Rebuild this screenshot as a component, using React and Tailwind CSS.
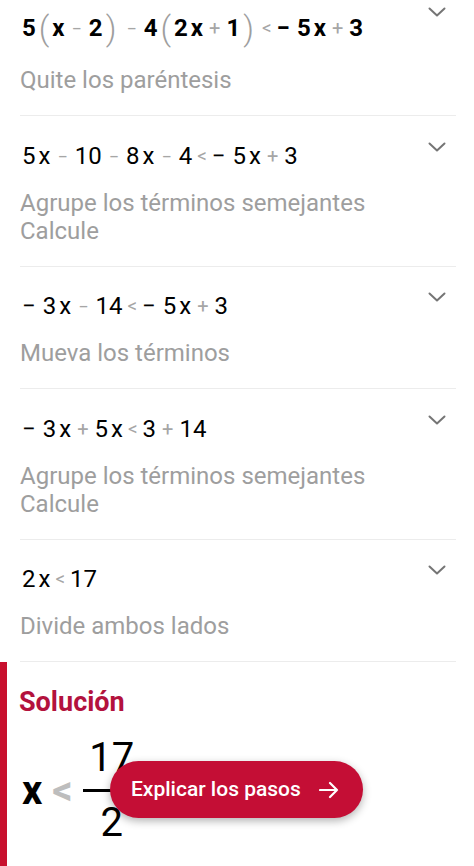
import React from "react";

const steps = [
  {
    tokens: ["5", "(", "x", "-", "2", ")", "-", "4", "(", "2x", "+", "1", ")", "<", "~", "5x", "+", "3"],
    bold: true,
    notes: ["Quite los paréntesis"],
  },
  {
    tokens: ["5x", "-", "10", "-", "8x", "-", "4", "<", "~", "5x", "+", "3"],
    notes: ["Agrupe los términos semejantes", "Calcule"],
  },
  {
    tokens: ["~", "3x", "-", "14", "<", "~", "5x", "+", "3"],
    notes: ["Mueva los términos"],
  },
  {
    tokens: ["~", "3x", "+", "5x", "<", "3", "+", "14"],
    notes: ["Agrupe los términos semejantes", "Calcule"],
  },
  {
    tokens: ["2x", "<", "17"],
    notes: ["Divide ambos lados"],
  },
];

function Chevron({ className }) {
  return (
    <svg width="20" height="10" viewBox="0 0 20 10" className={className}>
      <polyline points="2.5,1.5 10,8.5 17.5,1.5" fill="none" stroke="#757575" strokeWidth="2" strokeLinecap="round" strokeLinejoin="round" />
    </svg>
  );
}

function Eq({ tokens, bold }) {
  return (
    <div
      className={
        bold
          ? "flex items-center h-[36px] text-[24px] font-bold text-black"
          : "flex items-center h-[32px] text-[24px] font-normal text-black"
      }
    >
      {tokens.map((t, i) => {
        if (t === "(" || t === ")")
          return (
            <span key={i} className="mx-[3px] text-[33px] leading-none font-light text-[#9e9e9e]">
              {t}
            </span>
          );
        if (t === "-")
          return (
            <span key={i} className="mx-[7px] text-[18px] font-normal text-[#a6a6a6]">
              −
            </span>
          );
        if (t === "+")
          return (
            <span key={i} className="mx-[6px] text-[20px] font-normal text-[#a6a6a6]">
              +
            </span>
          );
        if (t === "<")
          return (
            <span key={i} className="mx-[5px] text-[19px] font-normal text-[#a6a6a6]">
              &lt;
            </span>
          );
        if (t === "~")
          return (
            <span key={i} className="mr-[7px]">
              −
            </span>
          );
        if (t.endsWith("x") && t.length > 1)
          return (
            <span key={i}>
              {t.slice(0, -1)}
              <span className="ml-[3px]">x</span>
            </span>
          );
        return <span key={i}>{t}</span>;
      })}
    </div>
  );
}

export default function App() {
  return (
    <div className="w-[474px] h-[866px] overflow-hidden bg-white font-['Roboto',sans-serif]">
      {steps.map((s, i) => (
        <div
          key={i}
          className={
            i === 0
              ? "ml-5 mr-[18px] pt-[10px] pb-[21px] border-b border-[#ececec] flex items-start justify-between"
              : s.notes.length > 1
                ? "ml-5 mr-[18px] pt-[24px] pb-[21px] border-b border-[#ececec] flex items-start justify-between"
                : "ml-5 mr-[18px] pt-[23px] pb-[21px] border-b border-[#ececec] flex items-start justify-between"
          }
        >
          <div className="pl-[2px]">
            <Eq tokens={s.tokens} bold={s.bold} />
            <div className={i === 0 ? "mt-[20px] -ml-[2px]" : "mt-[17px] -ml-[2px]"}>
              {s.notes.map((n) => (
                <div key={n} className="text-[24px] leading-[28px] text-[#9e9e9e]">
                  {n}
                </div>
              ))}
            </div>
          </div>
          <Chevron className={i === 0 ? "mr-[9px] -mt-[3px]" : "mr-[9px] mt-[2px]"} />
        </div>
      ))}

      <div className="relative h-[204px] border-l-[7px] border-[#c8102e] pl-[12px] pt-[25px]">
        <div className="text-[27px] leading-[30px] font-bold text-[#b3123d]">Solución</div>
        <div className="mt-[23px] ml-[3px] flex items-center">
          <span className="text-[40px] leading-[40px] font-bold text-black">x</span>
          <span className="ml-[10px] text-[40px] leading-[40px] font-bold text-[#bdbdbd]">&lt;</span>
          <div className="ml-[10px] flex flex-col items-center text-[40px] text-black">
            <span className="leading-[36px]">17</span>
            <div className="my-[13px] w-[58px] h-[3px] bg-black"></div>
            <span className="leading-[36px]">2</span>
          </div>
        </div>
        <button className="absolute left-[103px] top-[99px] w-[253px] h-[57px] rounded-full bg-[#c40e35] shadow-[0_3px_8px_rgba(0,0,0,0.3)] flex items-center pl-[21px] text-white text-[21px] font-medium">
          <span>Explicar los pasos</span>
          <svg width="20" height="18" viewBox="0 0 20 18" className="ml-[18px]">
            <path d="M1 9h17M11 2l7 7-7 7" fill="none" stroke="white" strokeWidth="2.2" strokeLinecap="round" strokeLinejoin="round" />
          </svg>
        </button>
      </div>
    </div>
  );
}
